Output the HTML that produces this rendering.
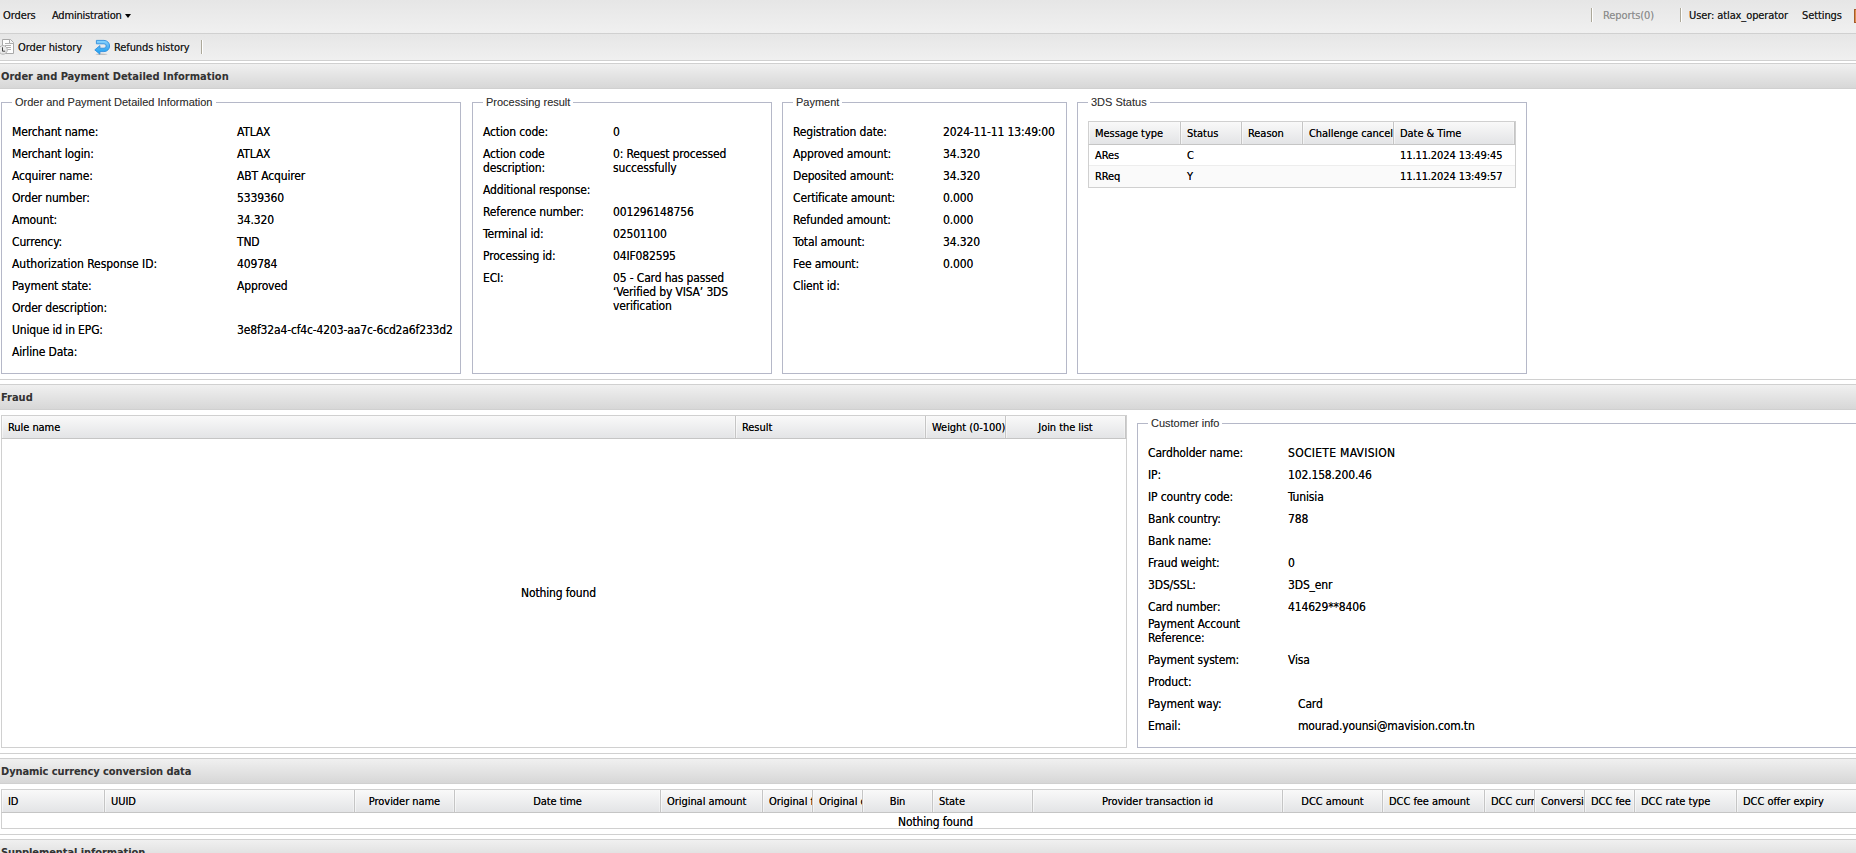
<!DOCTYPE html>
<html><head><meta charset="utf-8"><title>Order details</title>
<style>
html,body{margin:0;padding:0;background:#fff;overflow:hidden;}
body{width:1856px;height:853px;position:relative;font-family:"DejaVu Sans Condensed", "Liberation Sans", sans-serif;font-size:12px;color:#000;text-shadow:0 0 0 rgba(0,0,0,.7);}
div,span{position:absolute;white-space:nowrap;box-sizing:border-box;}
.tb{left:0;width:1856px;background:linear-gradient(#e6e6e6,#f0f0f0);border-bottom:1px solid #d0d0d0;}
.t{font-size:12px;line-height:14px;letter-spacing:-0.15px;color:#000;}
.b{font-size:11px;line-height:14px;letter-spacing:-0.1px;color:#222;}
.w{white-space:normal;}
.hd{left:0;width:1856px;height:26px;border-top:1px solid #d0d0d0;border-bottom:1px solid #d0d0d0;background:linear-gradient(#f0f0f0,#d7d7d7);}
.hd span{left:1px;top:5px;font-weight:bold;font-size:11px;line-height:15px;color:#333;text-shadow:0 0 0 rgba(0,0,0,.15);}
.fs{border:1px solid #b5b8c8;}
.lg{font-family:"Liberation Sans", sans-serif;font-size:11px;line-height:14px;color:#333;background:#fff;padding:0 3px;text-shadow:0 0 0 rgba(0,0,0,.3);}
.gh{background:linear-gradient(#f9f9f9,#e3e4e6);border:1px solid #d0d0d0;border-bottom-color:#c5c5c5;}
.ch{top:0;height:100%;border-right:1px solid #c5c5c5;font-size:11px;line-height:13px;padding:5px 6px 0 6px;overflow:hidden;color:#000;letter-spacing:-0.05px;box-shadow:inset 1px 0 0 rgba(255,255,255,.5),inset -1px 0 0 rgba(255,255,255,.35);}
.ch.c{text-align:center;}
.sep{width:1px;background:#aca899;box-shadow:1px 0 0 #fff;}
.ln{left:0;width:1856px;height:1px;background:#d0d0d0;}
</style></head>
<body>
<div class="tb" style="top:0;height:34px"></div>
<div class="tb" style="top:34px;height:27px"></div>
<span class="b" style="left:3px;top:9px;">Orders</span>
<span class="b" style="left:52px;top:9px;letter-spacing:-.2px">Administration</span>
<span style="left:125px;top:14px;width:0;height:0;border-left:3px solid transparent;border-right:3px solid transparent;border-top:4px solid #000"></span>
<span class="sep" style="left:1591px;top:8px;height:14px"></span>
<span class="b" style="left:1603px;top:9px;opacity:.45">Reports(0)</span>
<span class="sep" style="left:1680px;top:8px;height:14px"></span>
<span class="b" style="left:1689px;top:9px;">User: atlax_operator</span>
<span class="b" style="left:1802px;top:9px;">Settings</span>
<span style="left:1854px;top:9px;width:4px;height:14px;background:#dc9050;border:1px solid #a55a2a"></span>
<span class="b" style="left:18px;top:41px;">Order history</span>
<span class="b" style="left:114px;top:41px;">Refunds history</span>
<span class="sep" style="left:201px;top:40px;height:14px"></span>
<svg style="position:absolute;left:-2px;top:39px" width="16" height="16" viewBox="0 0 16 16"><path d="M4.5 0.5h8l3 3v11h-11z" fill="#fdfdfd" stroke="#a8a8a8"/><path d="M11.5 0.5v4h4" fill="#f4f4f4" stroke="#ababab"/><path d="M7 4.5h4.5M7 6.5h6M8.5 8.5h4.5M9.5 10.5h3.5" stroke="#b0b0b0"/><circle cx="5" cy="10.9" r="4.3" fill="#eaeaea" stroke="#b4b4b4"/><path d="M4.5 8.3v3.9h2.7" stroke="#444" stroke-width="1" fill="none"/></svg>
<svg style="position:absolute;left:94px;top:39px" width="16" height="16" viewBox="0 0 16 16"><defs><linearGradient id="ag" x1="0" y1="0" x2="0" y2="1"><stop offset="0" stop-color="#8cd6ff"/><stop offset=".45" stop-color="#58b4f2"/><stop offset="1" stop-color="#12a2f4"/></linearGradient></defs><ellipse cx="7.5" cy="15.3" rx="6" ry=".8" fill="#888" opacity=".45"/><path d="M2.4 1.4H10A5.6 5.6 0 0 1 10 12.6H5.9V15.2L0.8 10.9 5.9 6.6V9.2H10A2.2 2.2 0 0 0 10 4.8H2.4Z" fill="url(#ag)" stroke="#2f8fe0" stroke-width=".9" stroke-linejoin="round"/></svg>
<div class="ln" style="top:60px"></div>
<div class="hd" style="top:63px"><span>Order and Payment Detailed Information</span></div>
<div class="fs" style="left:1px;top:102px;width:460px;height:272px"></div>
<span class="lg" style="left:12px;top:95px">Order and Payment Detailed Information</span>
<div class="fs" style="left:472px;top:102px;width:300px;height:272px"></div>
<span class="lg" style="left:483px;top:95px">Processing result</span>
<div class="fs" style="left:782px;top:102px;width:285px;height:272px"></div>
<span class="lg" style="left:793px;top:95px">Payment</span>
<div class="fs" style="left:1077px;top:102px;width:450px;height:272px"></div>
<span class="lg" style="left:1088px;top:95px">3DS Status</span>
<span class="t" style="left:12px;top:125px;">Merchant name:</span>
<span class="t" style="left:237px;top:125px;">ATLAX</span>
<span class="t" style="left:12px;top:147px;">Merchant login:</span>
<span class="t" style="left:237px;top:147px;">ATLAX</span>
<span class="t" style="left:12px;top:169px;">Acquirer name:</span>
<span class="t" style="left:237px;top:169px;">ABT Acquirer</span>
<span class="t" style="left:12px;top:191px;">Order number:</span>
<span class="t" style="left:237px;top:191px;">5339360</span>
<span class="t" style="left:12px;top:213px;">Amount:</span>
<span class="t" style="left:237px;top:213px;">34.320</span>
<span class="t" style="left:12px;top:235px;">Currency:</span>
<span class="t" style="left:237px;top:235px;">TND</span>
<span class="t" style="left:12px;top:257px;letter-spacing:-.04px">Authorization Response ID:</span>
<span class="t" style="left:237px;top:257px;">409784</span>
<span class="t" style="left:12px;top:279px;">Payment state:</span>
<span class="t" style="left:237px;top:279px;">Approved</span>
<span class="t" style="left:12px;top:301px;">Order description:</span>
<span class="t" style="left:12px;top:323px;">Unique id in EPG:</span>
<span class="t" style="left:237px;top:323px;">3e8f32a4-cf4c-4203-aa7c-6cd2a6f233d2</span>
<span class="t" style="left:12px;top:345px;">Airline Data:</span>
<span class="t w" style="left:483px;top:125px;width:120px">Action code:</span>
<span class="t w" style="left:613px;top:125px;width:135px">0</span>
<span class="t w" style="left:483px;top:147px;width:120px">Action code description:</span>
<span class="t w" style="left:613px;top:147px;width:135px">0: Request processed successfully</span>
<span class="t w" style="left:483px;top:183px;width:120px">Additional response:</span>
<span class="t w" style="left:483px;top:205px;width:120px">Reference number:</span>
<span class="t w" style="left:613px;top:205px;width:135px">001296148756</span>
<span class="t w" style="left:483px;top:227px;width:120px">Terminal id:</span>
<span class="t w" style="left:613px;top:227px;width:135px">02501100</span>
<span class="t w" style="left:483px;top:249px;width:120px">Processing id:</span>
<span class="t w" style="left:613px;top:249px;width:135px">04IF082595</span>
<span class="t w" style="left:483px;top:271px;width:120px">ECI:</span>
<span class="t w" style="left:613px;top:271px;width:135px">05 - Card has passed ‘Verified by VISA’ 3DS verification</span>
<span class="t w" style="left:793px;top:125px;width:140px">Registration date:</span>
<span class="t w" style="left:943px;top:125px;width:120px">2024-11-11 13:49:00</span>
<span class="t w" style="left:793px;top:147px;width:140px">Approved amount:</span>
<span class="t w" style="left:943px;top:147px;width:120px">34.320</span>
<span class="t w" style="left:793px;top:169px;width:140px">Deposited amount:</span>
<span class="t w" style="left:943px;top:169px;width:120px">34.320</span>
<span class="t w" style="left:793px;top:191px;width:140px">Certificate amount:</span>
<span class="t w" style="left:943px;top:191px;width:120px">0.000</span>
<span class="t w" style="left:793px;top:213px;width:140px">Refunded amount:</span>
<span class="t w" style="left:943px;top:213px;width:120px">0.000</span>
<span class="t w" style="left:793px;top:235px;width:140px">Total amount:</span>
<span class="t w" style="left:943px;top:235px;width:120px">34.320</span>
<span class="t w" style="left:793px;top:257px;width:140px">Fee amount:</span>
<span class="t w" style="left:943px;top:257px;width:120px">0.000</span>
<span class="t w" style="left:793px;top:279px;width:140px">Client id:</span>
<div class="gh" style="left:1088px;top:121px;width:428px;height:24px">
<span class="ch" style="left:0px;width:92px">Message type</span>
<span class="ch" style="left:92px;width:61px">Status</span>
<span class="ch" style="left:153px;width:61px">Reason</span>
<span class="ch" style="left:214px;width:91px">Challenge cancel</span>
<span class="ch" style="left:305px;width:121px">Date &amp; Time</span>
</div>
<div style="left:1088px;top:145px;width:428px;height:43px;border:1px solid #d0d0d0;border-top:0;background:#fff"></div>
<div style="left:1089px;top:165px;width:426px;height:22px;background:#fafafa;border-top:1px solid #ededed"></div>
<span class="t" style="left:1095px;top:149px;font-size:11px;letter-spacing:-0.1px">ARes</span>
<span class="t" style="left:1187px;top:149px;font-size:11px;letter-spacing:-0.1px">C</span>
<span class="t" style="left:1400px;top:149px;font-size:11px;letter-spacing:-0.1px">11.11.2024 13:49:45</span>
<span class="t" style="left:1095px;top:170px;font-size:11px;letter-spacing:-0.1px">RReq</span>
<span class="t" style="left:1187px;top:170px;font-size:11px;letter-spacing:-0.1px">Y</span>
<span class="t" style="left:1400px;top:170px;font-size:11px;letter-spacing:-0.1px">11.11.2024 13:49:57</span>
<div class="ln" style="top:379px"></div>
<div class="hd" style="top:384px"><span>Fraud</span></div>
<div style="left:1px;top:415px;width:1126px;height:333px;border:1px solid #d0d0d0;background:#fff"></div>
<div class="gh" style="left:1px;top:415px;width:1126px;height:24px">
<span class="ch" style="left:0px;width:734px">Rule name</span>
<span class="ch" style="left:734px;width:190px">Result</span>
<span class="ch" style="left:924px;width:80px">Weight (0-100)</span>
<span class="ch c" style="left:1004px;width:120px">Join the list</span>
</div>
<span class="t" style="left:521px;top:586px;">Nothing found</span>
<div class="fs" style="left:1137px;top:423px;width:740px;height:325px"></div>
<span class="lg" style="left:1148px;top:416px">Customer info</span>
<span class="t w" style="left:1148px;top:446px;width:110px">Cardholder name:</span>
<span class="t" style="left:1288px;top:446px;letter-spacing:.29px">SOCIETE MAVISION</span>
<span class="t w" style="left:1148px;top:468px;width:110px">IP:</span>
<span class="t" style="left:1288px;top:468px;">102.158.200.46</span>
<span class="t w" style="left:1148px;top:490px;width:110px">IP country code:</span>
<span class="t" style="left:1288px;top:490px;">Tunisia</span>
<span class="t w" style="left:1148px;top:512px;width:110px">Bank country:</span>
<span class="t" style="left:1288px;top:512px;">788</span>
<span class="t w" style="left:1148px;top:534px;width:110px">Bank name:</span>
<span class="t w" style="left:1148px;top:556px;width:110px">Fraud weight:</span>
<span class="t" style="left:1288px;top:556px;">0</span>
<span class="t w" style="left:1148px;top:578px;width:110px">3DS/SSL:</span>
<span class="t" style="left:1288px;top:578px;">3DS_enr</span>
<span class="t w" style="left:1148px;top:600px;width:110px">Card number:</span>
<span class="t" style="left:1288px;top:600px;">414629**8406</span>
<span class="t w" style="left:1148px;top:617px;width:110px">Payment Account Reference:</span>
<span class="t w" style="left:1148px;top:653px;width:110px">Payment system:</span>
<span class="t" style="left:1288px;top:653px;">Visa</span>
<span class="t w" style="left:1148px;top:675px;width:110px">Product:</span>
<span class="t w" style="left:1148px;top:697px;width:110px">Payment way:</span>
<span class="t" style="left:1298px;top:697px;">Card</span>
<span class="t w" style="left:1148px;top:719px;width:110px">Email:</span>
<span class="t" style="left:1298px;top:719px;">mourad.younsi@mavision.com.tn</span>
<div class="ln" style="top:753px"></div>
<div class="hd" style="top:758px"><span style="letter-spacing:-.09px">Dynamic currency conversion data</span></div>
<div style="left:1px;top:789px;width:1890px;height:40px;border:1px solid #d0d0d0;background:#fff"></div>
<div class="gh" style="left:1px;top:789px;width:1890px;height:24px">
<span class="ch" style="left:0px;width:103px">ID</span>
<span class="ch" style="left:103px;width:250px">UUID</span>
<span class="ch c" style="left:353px;width:100px">Provider name</span>
<span class="ch c" style="left:453px;width:206px">Date time</span>
<span class="ch" style="left:659px;width:102px">Original amount</span>
<span class="ch" style="left:761px;width:50px">Original fee</span>
<span class="ch" style="left:811px;width:50px">Original currency</span>
<span class="ch c" style="left:861px;width:70px">Bin</span>
<span class="ch" style="left:931px;width:100px">State</span>
<span class="ch c" style="left:1031px;width:250px">Provider transaction id</span>
<span class="ch c" style="left:1281px;width:100px">DCC amount</span>
<span class="ch" style="left:1381px;width:102px">DCC fee amount</span>
<span class="ch" style="left:1483px;width:50px">DCC currency</span>
<span class="ch" style="left:1533px;width:50px">Conversion rate</span>
<span class="ch" style="left:1583px;width:50px">DCC fee</span>
<span class="ch" style="left:1633px;width:102px">DCC rate type</span>
<span class="ch" style="left:1735px;width:150px">DCC offer expiry</span>
</div>
<span class="t" style="left:898px;top:815px;">Nothing found</span>
<div class="ln" style="top:834px"></div>
<div class="hd" style="top:839px"><span style="letter-spacing:-.08px">Supplemental information</span></div>
</body></html>
